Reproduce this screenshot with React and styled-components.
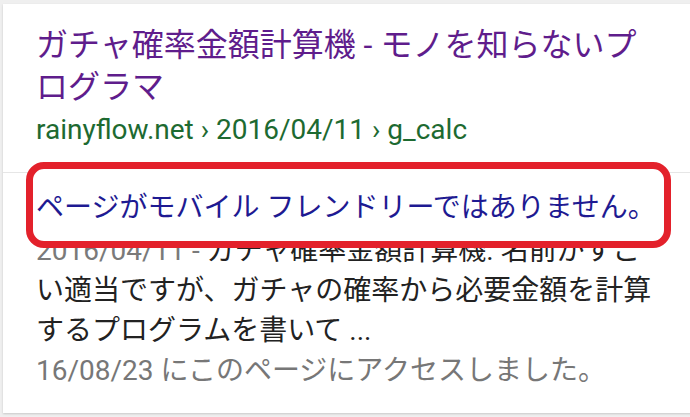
import React from 'react';
import styled, { createGlobalStyle } from 'styled-components';

const GlobalStyle = createGlobalStyle`
  html, body {
    margin: 0;
    padding: 0;
    background: #efefef;
    overflow: hidden;
  }
  body {
    font-family: Roboto, "Noto Sans CJK JP", sans-serif;
  }
`;

const result = {
  title: ['ガチャ確率金額計算機 - モノを知らないプ', 'ログラマ'],
  url: 'rainyflow.net › 2016/04/11 › g_calc',
  notice: 'ページがモバイル フレンドリーではありません。',
  date: '2016/04/11 - ',
  snippet: ['ガチャ確率金額計算機. 名前がすご', 'い適当ですが、ガチャの確率から必要金額を計算', 'するプログラムを書いて ...'],
  visited: '16/08/23 にこのページにアクセスしました。',
};

function App() {
  return (
    <>
      <GlobalStyle />
      <Page>
        <Card>
          <Head>
            <Title>
              {result.title[0]}
              <br />
              {result.title[1]}
            </Title>
            <Url>{result.url}</Url>
          </Head>
          <Body>
            <Notice>{result.notice}</Notice>
            <Snippet>
              <Line>
                <DateText>{result.date}</DateText>
                {result.snippet[0]}
              </Line>
              <Line>{result.snippet[1]}</Line>
              <Line>{result.snippet[2]}</Line>
              <Visited>{result.visited}</Visited>
            </Snippet>
          </Body>
        </Card>
      </Page>
    </>
  );
}

const Page = styled.div`
  width: 690px;
  height: 417px;
  padding: 4px 0 0 3px;
  box-sizing: border-box;
`;

const Card = styled.div`
  width: 700px;
  height: 409px;
  background: #fff;
  box-shadow: 0 1px 2px rgba(0, 0, 0, 0.16);
`;

const Head = styled.div`
  padding: 20px 0 24px 33px;
  border-bottom: 1px solid #e6e6e6;
`;

const Title = styled.div`
  font-size: 32px;
  line-height: 42px;
  color: #5f1d8c;
`;

const Url = styled.div`
  margin-top: 4px;
  font-size: 28px;
  line-height: 36px;
  color: #1d6a31;
`;

const Body = styled.div`
  padding: 0 0 0 23px;
`;

const Notice = styled.div`
  position: relative;
  z-index: 1;
  width: 628px;
  height: 72px;
  margin-top: -11px;
  margin-bottom: -17px;
  padding-left: 3px;
  border: 7px solid #e3212b;
  border-radius: 18px;
  background: #fff;
  display: flex;
  align-items: center;
  font-size: 28px;
  color: #1e1a92;
`;

const Snippet = styled.div`
  padding-left: 10px;
  font-size: 28px;
  line-height: 40px;
  color: #222;
`;

const Line = styled.div`
  white-space: nowrap;
`;

const DateText = styled.span`
  color: #7a7a7a;
`;

const Visited = styled.div`
  color: #777;
`;

export default App;
